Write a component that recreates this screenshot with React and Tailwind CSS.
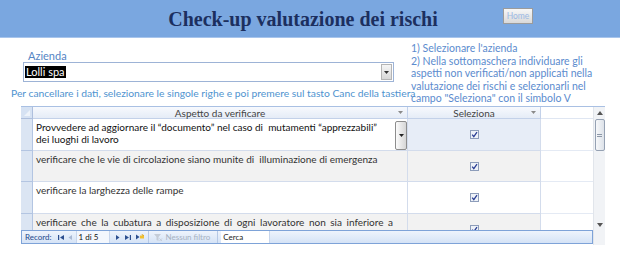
import React from "react";

const font = { fontFamily: "Lato, 'Liberation Sans', sans-serif" };

function Check() {
  return (
    <svg width="9" height="9" viewBox="0 0 9 9">
      <rect x="0.5" y="0.5" width="8" height="8" fill="#eef2f8" stroke="#8d9dba" />
      <path d="M2.2 4.6 L3.8 6.6 L7 2.2" stroke="#2b3f95" strokeWidth="1.3" fill="none" />
    </svg>
  );
}

function HeadArrow() {
  return (
    <svg width="5" height="4" viewBox="0 0 5 4" className="absolute right-[4px] top-[4px]">
      <path d="M0 0 H5 L2.5 3 Z" fill="#8a8a8a" />
    </svg>
  );
}

const rows = [
  {
    h: "h-[32px]",
    lines: [
      "Provvedere ad aggiornare il “documento” nel caso di  mutamenti “apprezzabili”",
      "dei luoghi di lavoro",
    ],
    aBg: "bg-white",
    sBg: "bg-[#e7edf7]",
    active: true,
  },
  {
    h: "h-[31px]",
    lines: ["verificare che le vie di circolazione siano munite di  illuminazione di emergenza"],
    aBg: "bg-[#f2f2f2]",
    sBg: "bg-[#f2f2f2]",
  },
  {
    h: "h-[32px]",
    lines: ["verificare la larghezza delle rampe"],
    aBg: "bg-white",
    sBg: "bg-white",
  },
  {
    h: "h-[32px]",
    lines: ["verificare che la cubatura a disposizione di ogni lavoratore non sia inferiore a"],
    aBg: "bg-[#f2f2f2]",
    sBg: "bg-[#f2f2f2]",
    justify: true,
  },
];

export default function App() {
  return (
    <div className="w-[620px] h-[256px] bg-white overflow-hidden" style={font}>
      {/* Header */}
      <div className="h-[38px] bg-[#7aa7e0] border-b border-[#a8c5ec] flex items-start">
        <div className="pl-[136px]">
          <div
            className="w-[334px] text-center pt-[6px] text-[20px] leading-[26px] font-bold text-[#1c2f5f]"
            style={{ fontFamily: "'Liberation Serif', serif" }}
          >
            Check-up valutazione dei rischi
          </div>
        </div>
        <div className="ml-[33px] mt-[8px] w-[30px] h-[16px] border border-[#9b9b9b] bg-gradient-to-b from-[#f7f7f7] to-[#d9d9d9] flex items-center justify-center text-[8.5px] text-[#9bb9e4]">
          Home
        </div>
      </div>

      {/* Top area */}
      <div className="h-[68px] flex">
        <div className="w-[408px] flex flex-col">
          <div className="pl-[28px] pt-[11px] text-[11px] leading-[13px] text-[#5585c4]">Azienda</div>
          <div className="ml-[23px] w-[371px] h-[20px] border border-[#9db3d6] bg-white flex items-center pl-[1px]">
            <span className="bg-black text-white text-[11px] leading-[11px] px-[1px] pb-[1px]">Lolli spa</span>
            <div className="ml-auto mr-[1px] w-[11px] h-[16px] border border-[#b5b5b5] bg-gradient-to-b from-[#f6f6f6] to-[#d8d8d8] flex items-center justify-center">
              <svg width="5" height="3" viewBox="0 0 5 3">
                <path d="M0 0 H5 L2.5 3 Z" fill="#333" />
              </svg>
            </div>
          </div>
          <div className="pl-[11px] pt-[5px] text-[10.3px] leading-[12px] text-[#4f93cf] whitespace-nowrap">
            Per cancellare i dati, selezionare le singole righe e poi premere sul tasto Canc della tastiera
          </div>
        </div>
        <div className="pl-[3px] pt-[4px] text-[10.5px] leading-[12.5px] text-[#5b8bce]">
          <div>1) Selezionare l'azienda</div>
          <div>2) Nella sottomaschera individuare gli</div>
          <div>aspetti non verificati/non applicati nella</div>
          <div>valutazione dei rischi e selezionarli nel</div>
          <div>campo "Seleziona" con il simbolo V</div>
        </div>
      </div>

      {/* Datasheet */}
      <div className="ml-[21px] w-[584px] flex border-t border-[#a9c0e3]">
        <div className="w-[572px] flex flex-col">
          {/* Header row */}
          <div className="h-[12px] flex text-[10px] leading-[12px] text-[#444]">
            <div className="w-[12px] bg-[#d6e2f3] border-r border-b border-[#aebfdd] relative">
              <svg width="8" height="8" viewBox="0 0 8 8" className="absolute left-[2px] top-[2px]">
                <path d="M7 1 V7 H1 Z" fill="#eef3fa" />
              </svg>
            </div>
            <div className="w-[375px] relative bg-gradient-to-b from-[#f7f9fd] to-[#e5ecf7] border-r border-b border-[#c3d1e9] text-center">
              Aspetto da verificare
              <HeadArrow />
            </div>
            <div className="w-[133px] relative bg-gradient-to-b from-[#f7f9fd] to-[#e5ecf7] border-r border-b border-[#c3d1e9] text-center">
              Seleziona
              <HeadArrow />
            </div>
            <div className="flex-1 bg-white border-b border-[#dfe6f2]" />
          </div>

          {/* Body */}
          <div className="h-[111px] overflow-hidden flex flex-col">
            {rows.map((r, i) => (
              <div key={i} className={`${r.h} shrink-0 flex`}>
                <div className="w-[12px] bg-[#dbe5f3] border-r border-b border-[#b3c5e2]" />
                <div
                  className={`w-[375px] ${r.aBg} border-r border-b border-[#d3dcec] relative pl-[3px] pt-[2px] text-[10px] leading-[12px] text-[#333]`}
                >
                  {r.justify ? (
                    <div className="pr-[14px] text-justify [text-align-last:justify]">{r.lines[0]}</div>
                  ) : (
                    r.lines.map((l, j) => (
                      <div key={j} className={`whitespace-pre ${r.active ? "text-[#111]" : ""}`}>
                        {l}
                      </div>
                    ))
                  )}
                  {r.active && (
                    <div className="absolute right-0 top-[2px] w-[12px] h-[29px] border border-[#8d8d8d] rounded-[2px] bg-gradient-to-r from-[#fbfbfb] to-[#d6d6d6] flex items-center justify-center">
                      <svg width="5" height="3" viewBox="0 0 5 3">
                        <path d="M0 0 H5 L2.5 3 Z" fill="#222" />
                      </svg>
                    </div>
                  )}
                </div>
                <div className={`w-[133px] ${r.sBg} border-r border-b border-[#d3dcec] flex items-center justify-center`}>
                  <Check />
                </div>
                <div className="flex-1 bg-white border-b border-[#e4eaf4]" />
              </div>
            ))}
          </div>

          {/* Navigation bar */}
          <div className="h-[14px] border border-[#7ea3d8] bg-gradient-to-b from-[#eef4fc] to-[#d5e3f6] flex items-center text-[8px] leading-[12px] text-[#1f4b8e]">
            <span className="pl-[3px]">Record:</span>
            <svg width="8" height="7" viewBox="0 0 8 7" className="ml-[5px]">
              <rect x="1" y="1" width="1.2" height="5" fill="#2c4f8f" />
              <path d="M7 1 V6 L3 3.5 Z" fill="#2c4f8f" />
            </svg>
            <svg width="6" height="7" viewBox="0 0 6 7" className="ml-[2px]">
              <path d="M5 1 V6 L1.5 3.5 Z" fill="#a9b9d4" />
            </svg>
            <div className="ml-[3px] w-[34px] h-[12px] bg-[#f3f7fd] border-x border-[#c8d6ec] pl-[2px] text-[#111]">
              1 di 5
            </div>
            <svg width="6" height="7" viewBox="0 0 6 7" className="ml-[5px]">
              <path d="M1 1 V6 L4.5 3.5 Z" fill="#2c4f8f" />
            </svg>
            <svg width="8" height="7" viewBox="0 0 8 7" className="ml-[3px]">
              <path d="M1 1 V6 L5 3.5 Z" fill="#2c4f8f" />
              <rect x="5.8" y="1" width="1.2" height="5" fill="#2c4f8f" />
            </svg>
            <svg width="10" height="8" viewBox="0 0 10 8" className="ml-[3px]">
              <path d="M1 1.5 V6.5 L4.5 4 Z" fill="#2c4f8f" />
              <rect x="5" y="2.5" width="4" height="3" fill="#f0c030" />
              <path d="M7 1 L7.6 2.4 L9 2.4" stroke="#e0a000" strokeWidth="0.8" fill="none" />
            </svg>
            <div className="ml-[3px] w-px h-[12px] bg-[#b6c9e6]" />
            <svg width="10" height="9" viewBox="0 0 10 9" className="ml-[4px]">
              <path d="M1 1 H8 L5.5 4 V8 L3.5 7 V4 Z" fill="#c5cdd8" />
              <path d="M6.5 5.5 L9 8 M9 5.5 L6.5 8" stroke="#c5cdd8" strokeWidth="1" />
            </svg>
            <span className="ml-[3px] text-[#a7b2c2]">Nessun filtro</span>
            <div className="ml-[7px] w-px h-[12px] bg-[#b6c9e6]" />
            <div className="ml-[3px] w-[49px] h-[12px] bg-white border-r border-[#c8d6ec] pl-[2px] text-[#222]">
              Cerca
            </div>
          </div>
        </div>

        {/* Scrollbar */}
        <div className="w-[12px] h-[138px] bg-[#f1f3f6] border-l border-[#e1e5eb] flex flex-col items-center">
          <svg width="6" height="4" viewBox="0 0 6 4" className="mt-[4px]">
            <path d="M0 4 H6 L3 0 Z" fill="#555" />
          </svg>
          <div className="mt-[4px] w-[10px] h-[32px] border border-[#95a1b3] rounded-[2px] bg-gradient-to-r from-[#f7f8fa] to-[#dde2e9] flex items-center justify-center">
            <div className="w-[5px] h-[3px] border-y border-[#8d98a8]" />
          </div>
          <svg width="6" height="4" viewBox="0 0 6 4" className="mt-[72px]">
            <path d="M0 0 H6 L3 4 Z" fill="#555" />
          </svg>
        </div>
      </div>
    </div>
  );
}
